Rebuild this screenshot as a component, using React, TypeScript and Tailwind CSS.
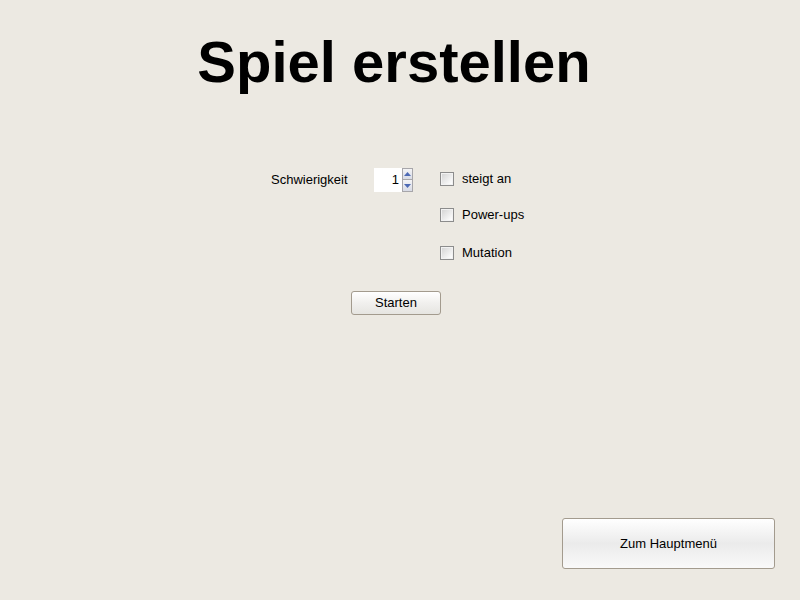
import { useState } from 'react'

// Swing-style "create game" screen: title, difficulty spinner, option checkboxes

const FONT = { fontFamily: '"Liberation Sans", Arial, sans-serif' }

function Spinner({ value, onChange }: { value: number; onChange: (v: number) => void }) {
  return (
    <div className="flex h-[24px] w-[39px]">
      <div className="flex w-[28px] items-center justify-end bg-white pr-[3px] text-[13px] text-black">
        {value}
      </div>
      <div className="flex w-[11px] flex-col border border-[#a7a6aa]">
        <button
          onClick={() => onChange(value + 1)}
          className="flex h-1/2 items-center justify-center border-b border-[#a7a6aa] bg-gradient-to-b from-[#f4f4f6] to-[#d8dbe6]"
        >
          <svg width="7" height="4" viewBox="0 0 7 4"><path d="M0 4L3.5 0L7 4Z" fill="#4d6ab5" /></svg>
        </button>
        <button
          onClick={() => onChange(Math.max(1, value - 1))}
          className="flex h-1/2 items-center justify-center bg-gradient-to-b from-[#f4f4f6] to-[#d8dbe6]"
        >
          <svg width="7" height="4" viewBox="0 0 7 4"><path d="M0 0L7 0L3.5 4Z" fill="#4d6ab5" /></svg>
        </button>
      </div>
    </div>
  )
}

function Check({ label, className }: { label: string; className?: string }) {
  const [on, setOn] = useState(false)
  return (
    <label className={`flex items-center gap-[8px] text-[13px] text-black ${className ?? ''}`} onClick={() => setOn(!on)}>
      <span className="flex h-[14px] w-[14px] items-center justify-center border border-[#8c8c8c]">
        <span className="flex h-[12px] w-[12px] items-center justify-center border border-[#f2f2f2] bg-gradient-to-br from-[#d6d6d6] to-white">
          {on && (
            <svg width="8" height="8" viewBox="0 0 8 8"><path d="M1 4L3 6L7 1" stroke="#21a121" strokeWidth="2" fill="none" /></svg>
          )}
        </span>
      </span>
      {label}
    </label>
  )
}

export default function App() {
  const [level, setLevel] = useState(1)

  return (
    <div className="flex h-[600px] w-[800px] flex-col bg-[#ece9e2]" style={FONT}>
      <h1 className="mt-[26px] text-center text-[58px] font-bold leading-[72px] text-black">
        <span className="relative left-[-6px]">Spiel erstellen</span>
      </h1>

      {/* settings form */}
      <div className="mt-[70px] flex pl-[271px]">
        <div className="flex h-[24px] w-[103px] items-center text-[13px] text-black">Schwierigkeit</div>
        <Spinner value={level} onChange={setLevel} />
        <div className="ml-[27px] mt-[1px] flex flex-col">
          <Check label="steigt an" className="h-[20px]" />
          <Check label="Power-ups" className="mt-[16px] h-[20px]" />
          <Check label="Mutation" className="mt-[18px] h-[20px]" />
        </div>
      </div>

      <div className="mt-[28px] flex pl-[351px]">
        <button className="h-[24px] w-[90px] rounded-[3px] border border-[#a39b8e] bg-gradient-to-b from-white via-[#f1f0ee] to-[#e6e5e1] text-[13px] text-black">
          Starten
        </button>
      </div>

      <div className="mt-auto flex justify-end pb-[31px] pr-[25px]">
        <button className="h-[51px] w-[213px] rounded-[3px] border border-[#a39b8e] bg-gradient-to-b from-white via-[#ebebeb] to-[#f9f9f9] text-[13px] text-black">
          Zum Hauptmenü
        </button>
      </div>
    </div>
  )
}
